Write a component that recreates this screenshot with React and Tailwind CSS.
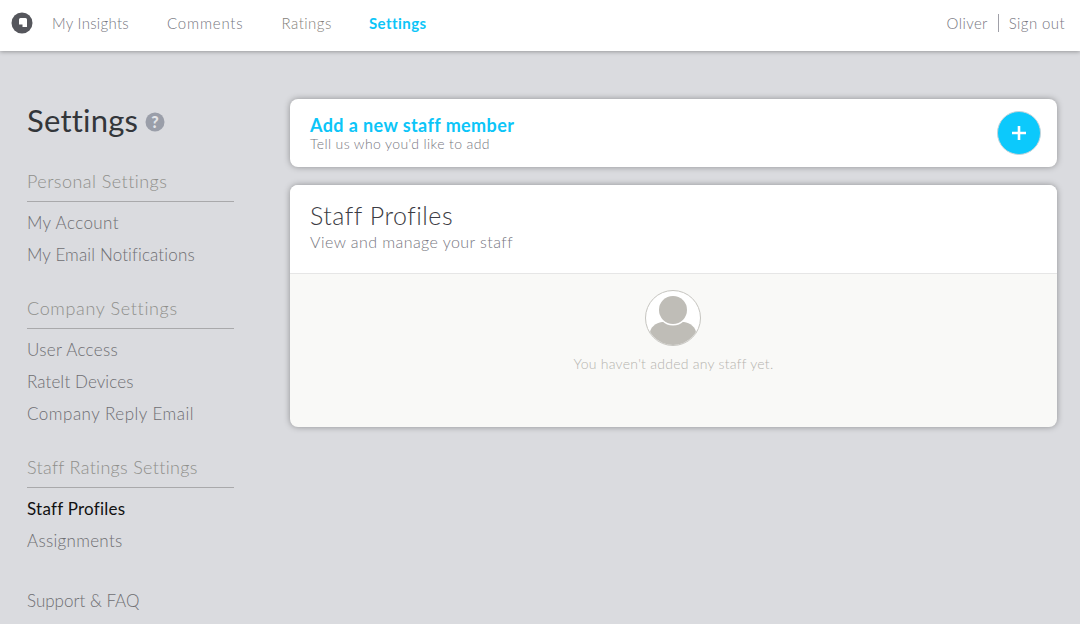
import React from "react";

const font = { fontFamily: '"Lato", "Noto Sans", sans-serif' };

function Logo() {
  return (
    <svg width="22" height="22" viewBox="0 0 22 22" className="block">
      <circle cx="11" cy="11" r="10.5" fill="#55565c" />
      <path d="M8 7.5A1.5 1.5 0 0 1 9.5 6h5A1.5 1.5 0 0 1 16 7.5V15h-4.5v-2.5H8z" fill="#fff" />
    </svg>
  );
}

function Section({ title, titleClass, items }) {
  return (
    <div className="mb-[25px]">
      <div className={`text-[18px] leading-[24px] font-light text-[#8f8f8b] pb-[8px] border-b border-[#a9a9ab] w-[207px] ${titleClass}`}>{title}</div>
      <div className="pt-[5px]">
        {items.map(([t, cls]) => (
          <div key={t} className={`text-[17px] leading-[32px] ${cls}`}>{t}</div>
        ))}
      </div>
    </div>
  );
}

const idle = "text-[#6e6e72] font-light";

export default function App() {
  return (
    <div style={font} className="w-[1080px] h-[624px] overflow-hidden bg-[#dadbdf] flex flex-col">
      <header className="h-[51px] shrink-0 bg-white shadow-[0_1px_4px_rgba(0,0,0,0.3)] flex items-center justify-between pl-[11px] pr-[15px] relative z-10">
        <div className="flex items-center">
          <div className="-mt-[6px]"><Logo /></div>
          <nav className="flex ml-[19px] gap-[38px] text-[15px] font-light text-[#77777f] -mt-[5px]">
            <span className="tracking-[0.3px]">My Insights</span>
            <span className="tracking-[0.8px]">Comments</span>
            <span className="tracking-[0.5px] text-[#857f7a]">Ratings</span>
            <span className="tracking-[0.45px] text-[#0cc5f8] font-bold -ml-[1px]">Settings</span>
          </nav>
        </div>
        <div className="flex items-center text-[15px] font-light text-[#77777f] tracking-[0.4px] -mt-[5px]">
          <span>Oliver</span>
          <span className="w-px h-[18px] bg-[#a0a0a8] mx-[10px]" />
          <span>Sign out</span>
        </div>
      </header>
      <div className="flex flex-1">
        <aside className="w-[290px] shrink-0 pl-[27px] pt-[49px]">
          <div className="flex items-center gap-[7px] mb-[29px]">
            <h1 className="text-[31px] leading-[40px] text-[#33363a] font-normal tracking-[0.2px]">Settings</h1>
            <svg width="20" height="20" viewBox="0 0 20 20" className="mt-[3px]">
              <circle cx="10" cy="10" r="9.5" fill="#9a9ea9" />
              <text x="10" y="15.5" textAnchor="middle" fontSize="16" fontWeight="900" fill="#e4e5e8" fontFamily="Lato">?</text>
            </svg>
          </div>
          <Section
            title="Personal Settings"
            titleClass="tracking-[0.45px]"
            items={[
              ["My Account", `${idle} tracking-[0.4px]`],
              ["My Email Notifications", `${idle} tracking-[0.15px]`],
            ]}
          />
          <Section
            title="Company Settings"
            titleClass="tracking-[0.65px]"
            items={[
              ["User Access", `${idle} tracking-[0.3px]`],
              ["RateIt Devices", `${idle} tracking-[0.1px]`],
              ["Company Reply Email", `${idle} tracking-[0.5px]`],
            ]}
          />
          <Section
            title="Staff Ratings Settings"
            titleClass="tracking-[0.3px]"
            items={[
              ["Staff Profiles", "text-[#111] font-normal tracking-[0.25px]"],
              ["Assignments", `${idle} tracking-[0.3px]`],
            ]}
          />
          <div className={`text-[17px] leading-[32px] mt-[28px] ${idle}`}>Support &amp; FAQ</div>
        </aside>
        <main className="w-[767px] pt-[48px]">
          <section className="h-[68px] bg-white rounded-[8px] shadow-[0_0_6px_rgba(0,0,0,0.35)] flex items-center justify-between pl-[20px] pr-[16px]">
            <div>
              <div className="text-[18px] leading-[22px] font-bold text-[#0cc5f8] tracking-[0.4px]">Add a new staff member</div>
              <div className="text-[14px] leading-[16px] font-light text-[#77777f] tracking-[0.38px]">Tell us who you'd like to add</div>
            </div>
            <div className="w-[44px] h-[44px] rounded-full bg-[#0cc9fc] border border-[#c4d4da] flex items-center justify-center">
              <svg width="14" height="14" viewBox="0 0 14 14"><path d="M7 0v14M0 7h14" stroke="#fff" strokeWidth="2.6" /></svg>
            </div>
          </section>
          <section className="mt-[18px] h-[242px] bg-[#f9f9f7] rounded-[8px] shadow-[0_0_6px_rgba(0,0,0,0.35)] overflow-hidden">
            <div className="h-[89px] bg-white border-b border-[#e6e6e6] pl-[20px] pt-[15px]">
              <div className="text-[25px] leading-[30px] font-light text-[#3c3c44] tracking-[0.5px]">Staff Profiles</div>
              <div className="text-[16px] leading-[22px] font-light text-[#77777f] tracking-[0.43px] mt-[1px]">View and manage your staff</div>
            </div>
            <div className="flex flex-col items-center pt-[16px] pr-[2px]">
              <div className="w-[56px] h-[56px] rounded-full bg-white border border-[#c6c5c0] overflow-hidden">
                <svg width="54" height="54" viewBox="0 0 54 54" className="block">
                  <path d="M4 54V42c0-6 6-10 12-11h22c6 1 12 5 12 11v12z" fill="#bfbdb7" />
                  <circle cx="27" cy="19" r="15.5" fill="#fff" />
                  <circle cx="27" cy="19" r="14" fill="#bfbdb7" />
                </svg>
              </div>
              <div className="mt-[8px] text-[14px] leading-[20px] font-light text-[#b5b3ae] tracking-[0.25px] pl-[2px]">You haven't added any staff yet.</div>
            </div>
          </section>
        </main>
      </div>
    </div>
  );
}
